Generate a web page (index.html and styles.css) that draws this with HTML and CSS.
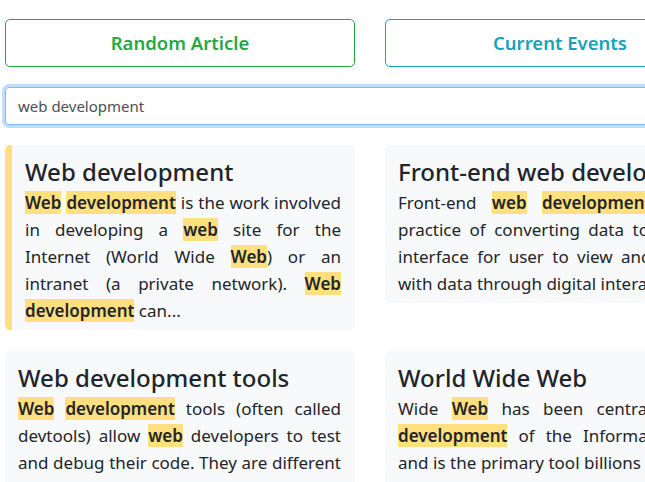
FILE: index.html
```html
<!DOCTYPE html>
<html lang="en">
<head>
<meta charset="utf-8">
<title>Wiki Search</title>
<link rel="stylesheet" href="styles.css">
</head>
<body>
<div class="page">
  <div class="actions">
    <button class="btn btn-green" type="button">Random Article</button>
    <button class="btn btn-teal" type="button">Current Events</button>
  </div>
  <input class="search" type="text" value="web development">
  <div class="results">
    <article class="card card-active">
      <h4 class="card-title">Web development</h4>
      <p class="card-text"><mark>Web</mark> <mark>development</mark> is the work involved in developing a <mark>web</mark> site for the Internet (World Wide <mark>Web</mark>) or an intranet (a private network). <mark>Web</mark> <mark>development</mark> can...</p>
    </article>
    <article class="card">
      <h4 class="card-title">Front-end web development</h4>
      <p class="card-text">Front-end <mark>web</mark> <mark>development</mark> is the practice of converting data to a visual interface for user to view and interact with data through digital interaction...</p>
    </article>
    <article class="card">
      <h4 class="card-title">Web development tools</h4>
      <p class="card-text"><mark>Web</mark> <mark>development</mark> tools (often called devtools) allow <mark>web</mark> developers to test and debug their code. They are different from website builders and integrated...</p>
    </article>
    <article class="card">
      <h4 class="card-title">World Wide Web</h4>
      <p class="card-text">Wide <mark>Web</mark> has been central to the <mark>development</mark> of the Information Age and is the primary tool billions of people use to interact on the Internet...</p>
    </article>
  </div>
</div>
</body>
</html>
```
FILE: styles.css
```css
* { box-sizing: border-box; }

html, body {
  margin: 0;
  padding: 0;
  background: #fff;
  overflow: hidden;
}

body {
  font-family: "Noto Sans", "Open Sans", sans-serif;
  color: #212529;
}

.page {
  width: 730px;
  padding: 19px 0 0 5px;
}

.actions {
  display: grid;
  grid-template-columns: 350px 350px;
  column-gap: 30px;
}

.btn {
  font-family: "Noto Sans", sans-serif;
  font-size: 18.5px;
  font-weight: 600;
  line-height: 30px;
  padding: 8px 16px;
  background: #fff;
  border: 1px solid;
  border-radius: 5px;
  text-align: center;
  cursor: pointer;
}

.btn-green { color: #28a745; border-color: #28a745; }
.btn-teal { color: #17a2b8; border-color: #17a2b8; }

.search {
  display: block;
  width: 730px;
  height: 38px;
  margin: 20px 0 0;
  padding: 6px 12px;
  font-family: "Noto Sans", sans-serif;
  font-size: 15px;
  color: #495057;
  background: #fff;
  border: 1px solid #80bdff;
  border-radius: 4px;
  box-shadow: 0 0 0 3px rgba(0, 123, 255, 0.25);
  outline: none;
}

.results {
  display: grid;
  grid-template-columns: 350px 350px;
  column-gap: 30px;
  row-gap: 21px;
  align-items: start;
  margin-top: 20px;
}

.card {
  background: #f8f9fa;
  border-radius: 5px;
  padding: 11px 14px 6px 13px;
}

.card-active {
  border-left: 7px solid #ffdf7e;
}

.card-title {
  margin: 0 0 2px;
  font-size: 24px;
  font-weight: 500;
  line-height: 31px;
  white-space: nowrap;
}

.card-text {
  margin: 0;
  font-size: 17px;
  line-height: 27px;
  text-align: justify;
}

mark {
  background: #ffdf7e;
  color: #212529;
  font-weight: 600;
  padding: 0;
}
```
